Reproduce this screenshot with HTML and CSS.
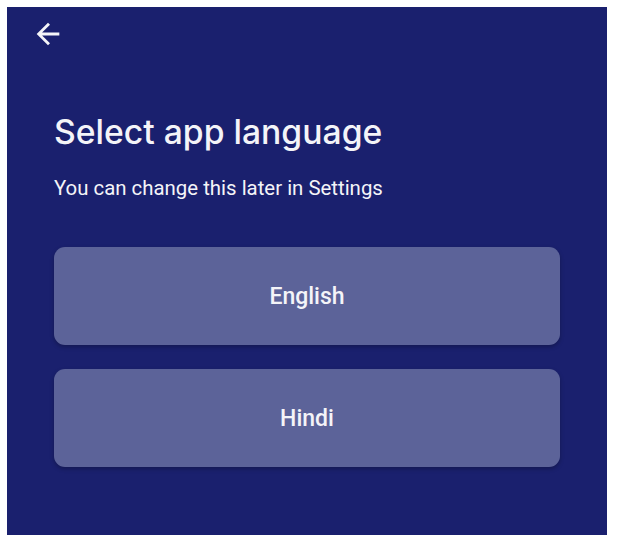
FILE: index.html
```html
<!DOCTYPE html>
<html lang="en">
<head>
    <meta charset="UTF-8">
    <meta name="viewport" content="width=device-width, initial-scale=1.0">
    <title>Select app language</title>
    <link rel="stylesheet" href="styles.css">
</head>
<body>
    <div class="screen">
        <div class="toolbar">
            <button class="back-button" aria-label="Back">
                <svg viewBox="0 0 24 24" width="34" height="34"><path fill="currentColor" d="M20 11H7.83l5.59-5.59L12 4l-8 8 8 8 1.41-1.41L7.83 13H20v-2z"/></svg>
            </button>
        </div>
        <div class="content">
            <h1>Select app language</h1>
            <p class="subtitle">You can change this later in Settings</p>
            <div class="languages">
                <button class="language">English</button>
                <button class="language">Hindi</button>
            </div>
        </div>
    </div>
</body>
</html>
```

FILE: styles.css
```css
:root {
    --screen-blue: #1a206e;
    --button-blue: #5c6399;
    --text-white: #f4f4f8;
}
body, html {
    margin: 0;
    background: #ffffff;
    font-family: Roboto, 'Noto Sans', Arial, sans-serif;
}
.screen {
    width: 600px;
    height: 528px;
    margin: 7px;
    background-color: var(--screen-blue);
    color: var(--text-white);
    box-sizing: border-box;
}
.toolbar {
    height: 68px;
    padding: 10px 0 0 24px;
    box-sizing: border-box;
}
.back-button {
    display: block;
    width: 34px;
    height: 34px;
    padding: 0;
    border: none;
    background: none;
    color: var(--text-white);
    cursor: pointer;
}
.back-button svg {
    display: block;
}
.content {
    padding: 0 47px;
}
h1 {
    margin: 37px 0 0;
    font-family: Inter, Roboto, sans-serif;
    font-weight: 500;
    font-size: 33.7px;
    line-height: 40px;
}
.subtitle {
    margin: 24px 0 0;
    font-size: 20.4px;
    line-height: 24px;
}
.languages {
    display: flex;
    flex-direction: column;
    gap: 24px;
    margin-top: 47px;
}
.language {
    height: 98px;
    border: none;
    border-radius: 11px;
    background-color: var(--button-blue);
    color: var(--text-white);
    font-family: Roboto, Arial, sans-serif;
    font-weight: 500;
    font-size: 23px;
    box-shadow: 0 2px 4px rgba(0,0,0,0.25);
    cursor: pointer;
}
```
